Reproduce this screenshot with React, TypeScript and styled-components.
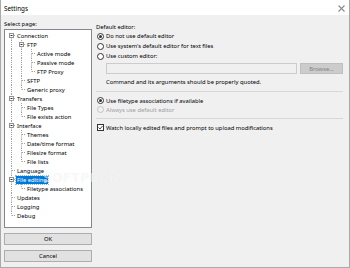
import React from "react"
import styled, { createGlobalStyle } from "styled-components"

type TreeNode = { label: string; children?: TreeNode[]; selected?: boolean }

type FlatRow = {
  label: string
  level: number
  trail: boolean[]
  hasNext: boolean
  hasChildren: boolean
  isFirst: boolean
  selected?: boolean
}

const pages: TreeNode[] = [
  {
    label: "Connection",
    children: [
      {
        label: "FTP",
        children: [
          { label: "Active mode" },
          { label: "Passive mode" },
          { label: "FTP Proxy" },
        ],
      },
      { label: "SFTP" },
      { label: "Generic proxy" },
    ],
  },
  {
    label: "Transfers",
    children: [{ label: "File Types" }, { label: "File exists action" }],
  },
  {
    label: "Interface",
    children: [
      { label: "Themes" },
      { label: "Date/time format" },
      { label: "Filesize format" },
      { label: "File lists" },
    ],
  },
  { label: "Language" },
  {
    label: "File editing",
    selected: true,
    children: [{ label: "Filetype associations" }],
  },
  { label: "Updates" },
  { label: "Logging" },
  { label: "Debug" },
]

const flatten = (nodes: TreeNode[], level = 0, trail: boolean[] = []): FlatRow[] =>
  nodes.flatMap((node, i) => {
    const hasNext = i < nodes.length - 1
    const row: FlatRow = {
      label: node.label,
      level,
      trail,
      hasNext,
      hasChildren: !!node.children,
      isFirst: level === 0 && i === 0,
      selected: node.selected,
    }
    return [
      row,
      ...(node.children ? flatten(node.children, level + 1, [...trail, hasNext]) : []),
    ]
  })

const GlobalStyle = createGlobalStyle`
  html, body {
    margin: 0;
    padding: 0;
    background: #f0f0f0;
  }
  body {
    font-family: "Noto Sans", "Open Sans", sans-serif;
  }
`

const Window = styled.div`
  position: relative;
  width: 350px;
  height: 268px;
  box-sizing: border-box;
  border: 1px solid #a9a9a9;
  border-top: none;
  background: #f0f0f0;
  display: flex;
  flex-direction: column;
  overflow: hidden;
  font-size: 5.8px;
  color: #000;
`

const TitleBar = styled.div`
  height: 15px;
  flex: none;
  background: #fff;
  display: flex;
  align-items: center;
  justify-content: space-between;
  padding: 1px 4px 0 3px;
  box-sizing: border-box;
  font-size: 6.3px;
`

const Body = styled.div`
  flex: 1;
  display: flex;
  gap: 4px;
  padding: 3px 6px 5px 3px;
  min-height: 0;
`

const LeftColumn = styled.div`
  width: 88px;
  flex: none;
  display: flex;
  flex-direction: column;
`

const Caption = styled.div`
  height: 10px;
  line-height: 13px;
  margin-bottom: 1px;
`

const TreeBox = styled.div`
  flex: 1;
  background: #fff;
  border: 1px solid #828790;
  padding: 1px 0;
`

const Row = styled.div`
  display: flex;
  align-items: center;
  height: 9px;
  padding-left: 1px;
  white-space: nowrap;
`

const Label = styled.span<{ $selected?: boolean }>`
  line-height: 8px;
  margin-left: ${(p) => (p.$selected ? "0" : "1px")};
  padding: ${(p) => (p.$selected ? "0 1px" : "0")};
  background: ${(p) => (p.$selected ? "#0078d7" : "transparent")};
  color: ${(p) => (p.$selected ? "#fff" : "#000")};
  outline: ${(p) => (p.$selected ? "1px dotted #7fbbeb" : "none")};
`

const DialogButton = styled.div`
  height: 12px;
  box-sizing: border-box;
  margin-top: 5px;
  border: 1px solid #adadad;
  background: #e1e1e1;
  display: flex;
  align-items: center;
  justify-content: center;
`

const RightColumn = styled.div`
  flex: 1;
  display: flex;
  flex-direction: column;
  padding-top: 4px;
`

const Heading = styled.div`
  height: 9px;
  line-height: 10px;
`

const OptionGroup = styled.div<{ $step: number }>`
  display: flex;
  flex-direction: column;
  padding-left: 1px;

  & > * {
    height: ${(p) => p.$step}px;
  }
`

const Option = styled.label<{ $disabled?: boolean }>`
  display: flex;
  align-items: center;
  gap: 2px;
  color: ${(p) => (p.$disabled ? "#a0a0a0" : "#000")};
`

const Radio = styled.span<{ $checked?: boolean; $disabled?: boolean }>`
  width: 7px;
  height: 7px;
  box-sizing: border-box;
  border-radius: 50%;
  border: 1px solid ${(p) => (p.$disabled ? "#c4c4c4" : "#333")};
  background: ${(p) => (p.$disabled ? "#f0f0f0" : "#fff")};
  display: flex;
  align-items: center;
  justify-content: center;

  &::after {
    content: "";
    width: 3px;
    height: 3px;
    border-radius: 50%;
    background: ${(p) => (p.$checked ? "#333" : "transparent")};
  }
`

const Check = styled.span`
  width: 7px;
  height: 7px;
  box-sizing: border-box;
  border: 1px solid #333;
  background: #fff;
  display: flex;
  align-items: center;
  justify-content: center;
`

const CommandRow = styled.div`
  display: flex;
  gap: 3px;
  margin: 2px 0 0 10px;
  height: 11px;
`

const CommandInput = styled.div`
  flex: 1;
  border: 1px solid #cccccc;
  background: #f0f0f0;
`

const BrowseButton = styled.div`
  width: 43px;
  box-sizing: border-box;
  border: 1px solid #bfbfbf;
  background: #cccccc;
  color: #838383;
  display: flex;
  align-items: center;
  justify-content: center;
`

const Hint = styled.div`
  margin: 3px 0 0 10px;
  height: 10px;
  line-height: 10px;
`

const Separator = styled.div`
  height: 1px;
  background: #d7d7d7;
  margin: 4px 0 4px 0;
`

const Watermark = styled.div`
  position: absolute;
  left: 42px;
  top: 171px;
  font-family: "DejaVu Sans", sans-serif;
  font-weight: bold;
  font-size: 12px;
  letter-spacing: 0.5px;
  color: rgba(255, 255, 255, 0.55);
  text-shadow: 0 0 1px rgba(0, 0, 0, 0.06);
  pointer-events: none;
`

const Guide = ({ row, index }: { row: FlatRow; index: number }) => {
  const dots = { stroke: "#a0a0a0", strokeWidth: 1, strokeDasharray: "1 1" }
  if (index < row.level) {
    return (
      <svg width={10} height={9} style={{ flex: "none" }}>
        {row.trail[index] && <line x1={5.5} y1={0} x2={5.5} y2={9} {...dots} />}
      </svg>
    )
  }
  return (
    <svg width={10} height={9} style={{ flex: "none" }}>
      {!row.isFirst && <line x1={5.5} y1={0} x2={5.5} y2={4.5} {...dots} />}
      {row.hasNext && <line x1={5.5} y1={4.5} x2={5.5} y2={9} {...dots} />}
      <line x1={6} y1={4.5} x2={10} y2={4.5} {...dots} />
      {row.hasChildren && (
        <g>
          <rect x={3.5} y={2.5} width={4} height={4} fill="#fff" stroke="#919191" />
          <line x1={4.5} y1={4.5} x2={6.5} y2={4.5} stroke="#333" />
        </g>
      )}
    </svg>
  )
}

const App = () => {
  const rows = flatten(pages)
  return (
    <Window>
      <GlobalStyle />
      <TitleBar>
        <span>Settings</span>
        <svg width={7} height={7} viewBox="0 0 7 7">
          <path d="M0.5 0.5 L6.5 6.5 M6.5 0.5 L0.5 6.5" stroke="#8c8c8c" strokeWidth={1.1} />
        </svg>
      </TitleBar>
      <Body>
        <LeftColumn>
          <Caption>Select page:</Caption>
          <TreeBox>
            {rows.map((row) => (
              <Row key={row.label}>
                {Array.from({ length: row.level + 1 }, (_, i) => (
                  <Guide key={i} row={row} index={i} />
                ))}
                <Label $selected={row.selected}>{row.label}</Label>
              </Row>
            ))}
          </TreeBox>
          <DialogButton>OK</DialogButton>
          <DialogButton>Cancel</DialogButton>
        </LeftColumn>
        <RightColumn>
          <Heading>Default editor:</Heading>
          <OptionGroup $step={10}>
            <Option>
              <Radio $checked />
              Do not use default editor
            </Option>
            <Option>
              <Radio />
              Use system's default editor for text files
            </Option>
            <Option>
              <Radio />
              Use custom editor:
            </Option>
          </OptionGroup>
          <CommandRow>
            <CommandInput />
            <BrowseButton>Browse...</BrowseButton>
          </CommandRow>
          <Hint>Command and its arguments should be properly quoted.</Hint>
          <Separator />
          <OptionGroup $step={9}>
            <Option>
              <Radio $checked />
              Use filetype associations if available
            </Option>
            <Option $disabled>
              <Radio $disabled />
              Always use default editor
            </Option>
          </OptionGroup>
          <Separator />
          <OptionGroup $step={9}>
            <Option>
              <Check>
                <svg width={5} height={5} viewBox="0 0 5 5">
                  <path d="M0.5 2.5 L2 4 L4.5 1" fill="none" stroke="#333" strokeWidth={0.9} />
                </svg>
              </Check>
              Watch locally edited files and prompt to upload modifications
            </Option>
          </OptionGroup>
        </RightColumn>
      </Body>
      <Watermark>SOFTPEDIA</Watermark>
    </Window>
  )
}

export default App
